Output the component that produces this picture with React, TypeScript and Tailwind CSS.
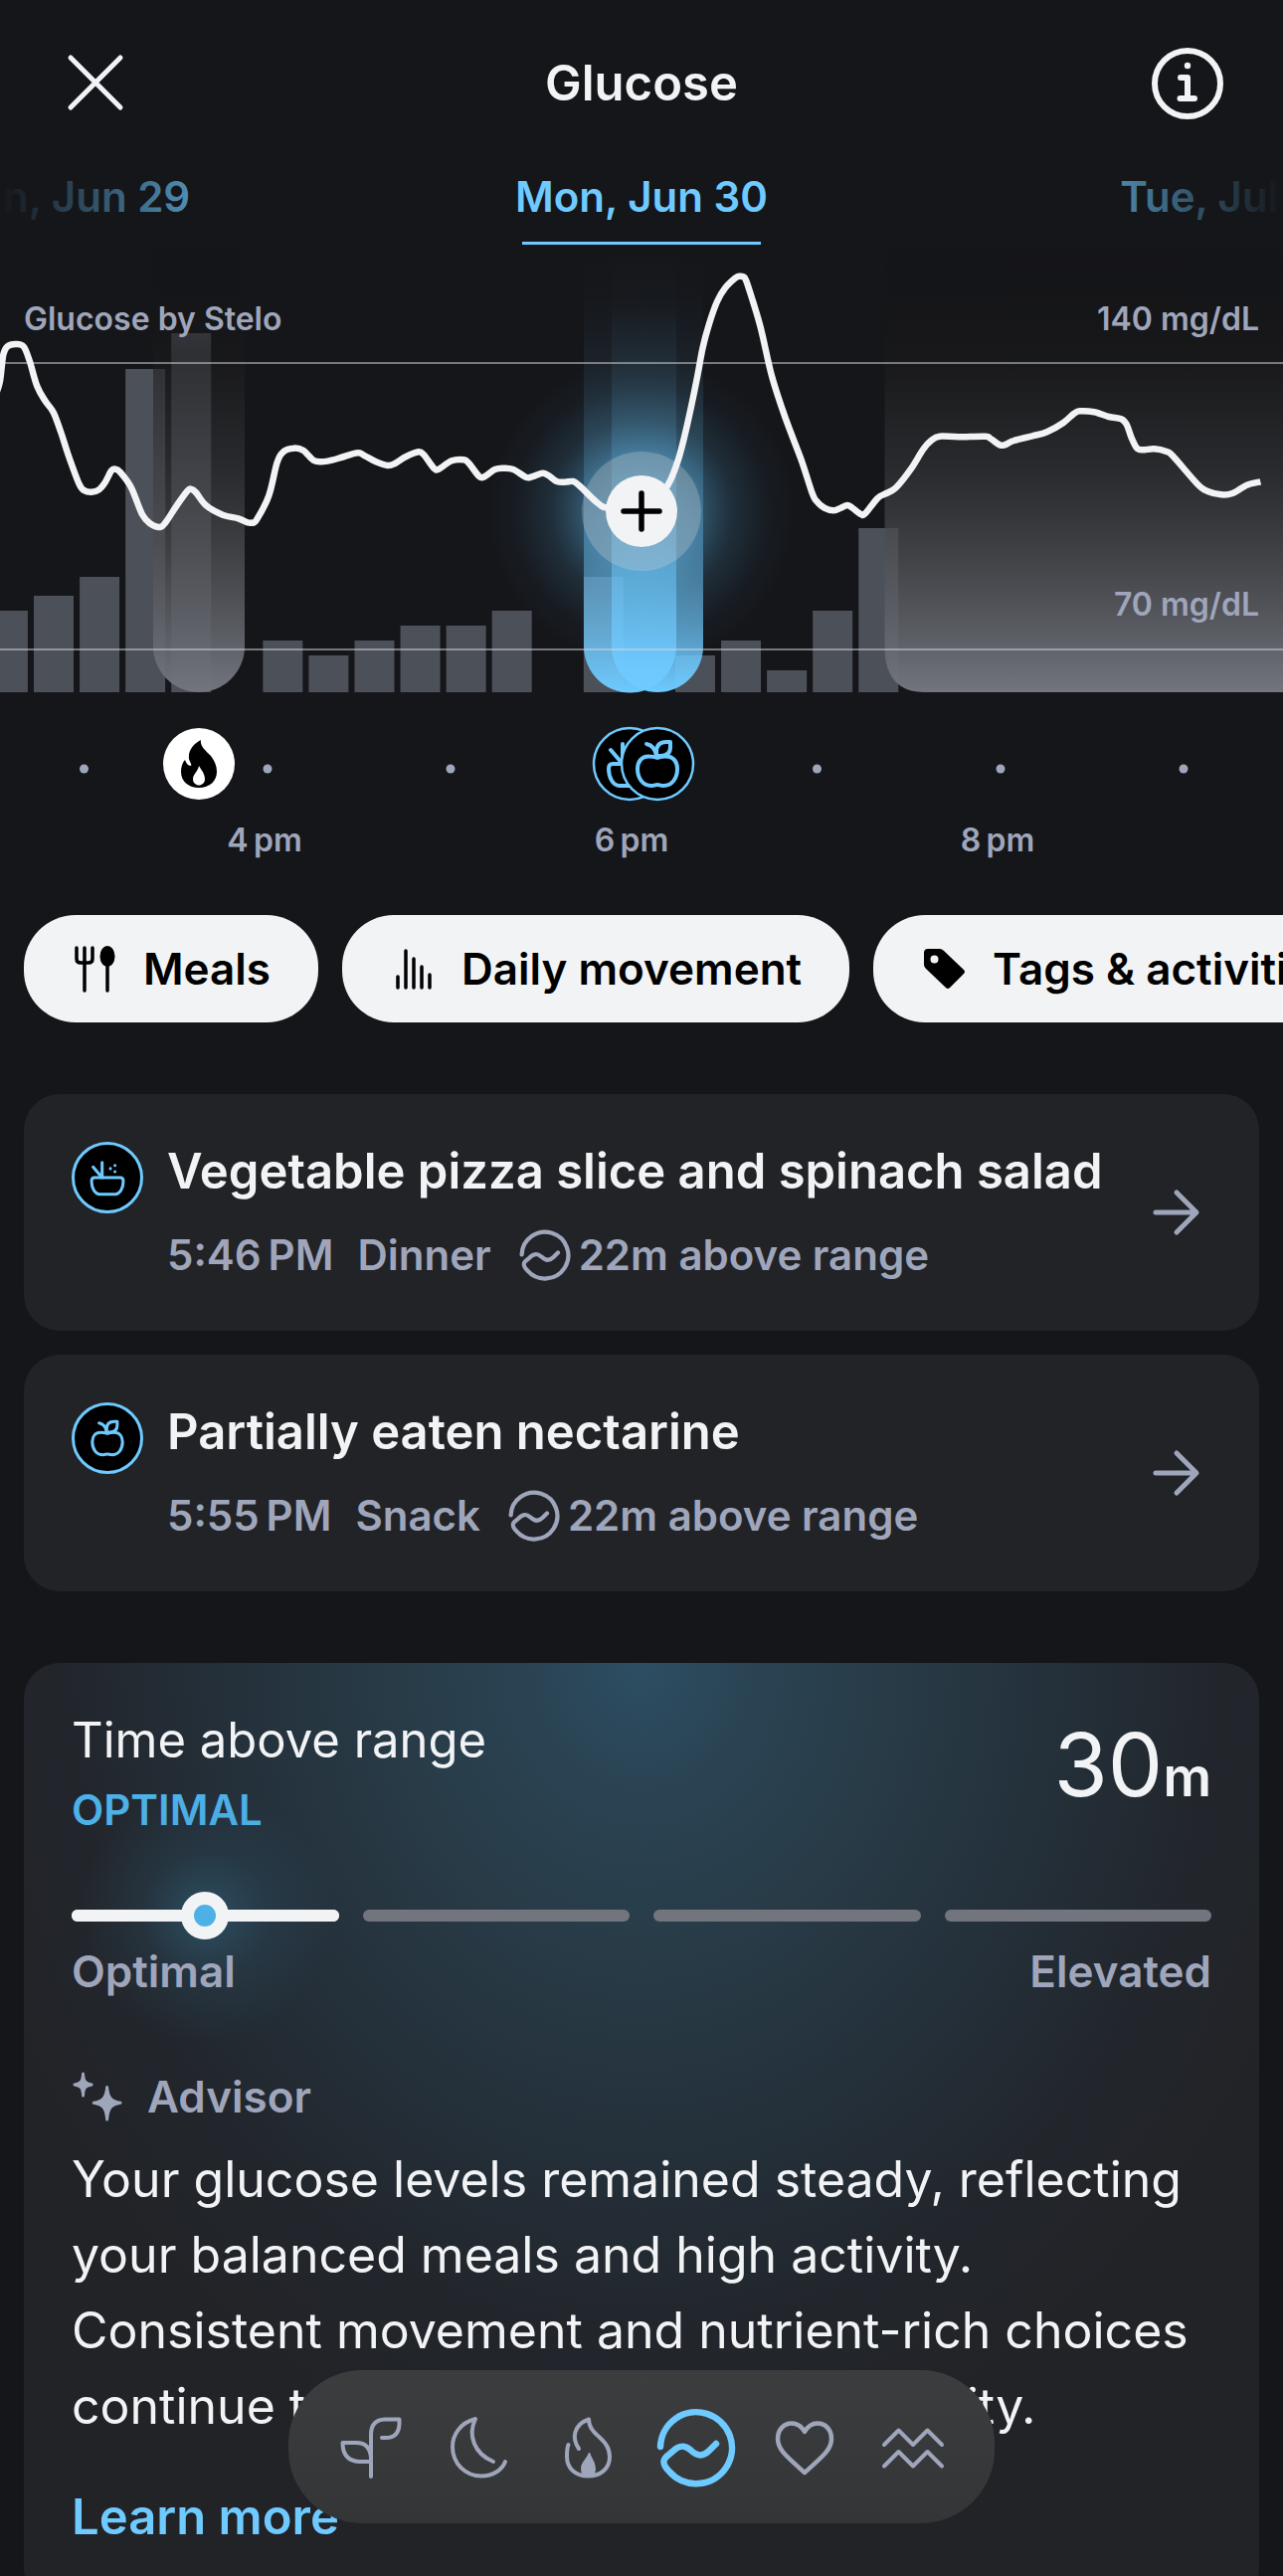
// src/features/glucose/GlucoseScreen.tsx
import type { ReactNode } from "react";

type Point = [number, number];

interface Meal {
  title: string;
  time:  string;
  kind:  string;
  note:  string;
  icon:  "bowl" | "apple";
}

const DAYS = ["Sun, Jun 29", "Mon, Jun 30", "Tue, Jul 1"];

const MEALS: Meal[] = [
  { title: "Vegetable pizza slice and spinach salad", time: "5:46\u2009PM", kind: "Dinner", note: "22m above range", icon: "bowl" },
  { title: "Partially eaten nectarine", time: "5:55\u2009PM", kind: "Snack", note: "22m above range", icon: "apple" },
];

// Movement bars: [slot, top]
const BARS: Point[] = [
  [-1, 614], [0, 599], [1, 580], [2, 371], [3, 335], [5, 644], [6, 659], [7, 644], [8, 629], [9, 629],
  [10, 614], [12, 580], [14, 659], [15, 644], [16, 674], [17, 614], [18, 531],
];

// Glucose trace in sample units, see toScreen
const TRACE: Point[] = [
  [-10, 470], [0, 430], [8, 350], [18, 325], [37, 318], [57, 325], [72, 370], [90, 445], [110, 490], [130, 525],
  [148, 585], [165, 650], [192, 740], [205, 760], [222, 764], [240, 757], [255, 735], [270, 700], [280, 695],
  [292, 705], [318, 750], [345, 832], [365, 860], [388, 870], [402, 855], [430, 802], [455, 760], [463, 755],
  [475, 765], [500, 805], [540, 833], [578, 844], [600, 856], [610, 857], [622, 848], [652, 775], [672, 675],
  [688, 642], [712, 632], [735, 638], [760, 668], [780, 673], [805, 668], [835, 657], [868, 646], [885, 655],
  [912, 673], [940, 684], [958, 678], [985, 657], [1015, 643], [1028, 652], [1052, 692], [1064, 695], [1095, 670],
  [1125, 667], [1137, 677], [1162, 717], [1175, 718], [1200, 696], [1220, 692], [1245, 696], [1275, 719],
  [1290, 718], [1315, 707], [1330, 714], [1350, 732], [1370, 734], [1390, 732], [1405, 745], [1450, 798],
  [1475, 812], [1544, 815], [1584, 790], [1619, 745], [1644, 670], [1664, 575], [1689, 430], [1704, 330],
  [1719, 260], [1739, 190], [1759, 148], [1784, 118], [1794, 113], [1806, 118], [1816, 150], [1844, 265],
  [1872, 415], [1906, 545], [1944, 670], [1969, 765], [1979, 790], [1999, 812], [2022, 820], [2039, 812],
  [2055, 804], [2066, 811], [2089, 832], [2099, 828], [2129, 782], [2146, 770], [2172, 752], [2209, 695],
  [2239, 635], [2259, 608], [2279, 596], [2324, 598], [2389, 596], [2402, 603], [2424, 622], [2436, 622],
  [2459, 609], [2504, 595], [2539, 583], [2579, 555], [2604, 528], [2619, 520], [2654, 523], [2689, 537],
  [2719, 544], [2732, 560], [2744, 600], [2756, 630], [2769, 637], [2799, 634], [2829, 642], [2844, 655],
  [2904, 740], [2929, 762], [2962, 772], [2989, 768], [3024, 743], [3057, 733],
];

const toScreen = ([x, y]: Point): Point => [x / 2.412, 240 + y / 3];

function smoothPath(points: Point[]) {
  const p = points.map(toScreen);
  let d = `M${p[0][0].toFixed(1)} ${p[0][1].toFixed(1)}`;
  for (let i = 0; i < p.length - 1; i++) {
    const a = p[Math.max(i - 1, 0)];
    const b = p[i];
    const c = p[i + 1];
    const e = p[Math.min(i + 2, p.length - 1)];
    const cp = [b[0] + (c[0] - a[0]) / 6, b[1] + (c[1] - a[1]) / 6, c[0] - (e[0] - b[0]) / 6, c[1] - (e[1] - b[1]) / 6];
    d += `C${cp.map((n) => n.toFixed(1)).join(" ")} ${c[0].toFixed(1)} ${c[1].toFixed(1)}`;
  }
  return d;
}

/* ---------- icons ---------- */

function AppleGlyph() {
  return (
    <g fill="none" stroke="#6ecaff" strokeWidth="4" strokeLinecap="round" strokeLinejoin="round">
      <path d="M0 -6C-4 -7.500 -6 -7.500 -9 -7.500C-16 -7.500 -20 -2 -20 5C-20 14 -15 22 -6 22C-3 22 -2 21 0 21C2 21 3 22 6 22C15 22 20 14 20 5C20 -2 16 -7.500 9 -7.500C6 -7.500 4 -7.500 0 -6Z" />
      <path d="M-1 -8C-2 -15 -6 -19 -11 -20" />
      <path d="M-1 -8V-12Q-1 -22 9 -22H13V-17Q13 -8 3 -8Z" />
    </g>
  );
}

function BowlGlyph() {
  return (
    <g>
      <g fill="none" stroke="#6ecaff" strokeWidth="4" strokeLinecap="round" strokeLinejoin="round">
        <path d="M-17 0H17Q21 0 21 5C21 13 17 22 10 22H-10C-17 22 -21 13 -21 5Q-21 0 -17 0Z" />
        <path d="M-7 -20V0L-19 -14" />
      </g>
      <g fill="#6ecaff">
        <circle cx="4" cy="-12" r="2" />
        <circle cx="10" cy="-16" r="2" />
        <circle cx="10" cy="-8" r="2" />
      </g>
    </g>
  );
}

function MealBadge({ icon }: { icon: Meal["icon"] }) {
  return (
    <svg viewBox="-36 -36 72 72" className="size-18 shrink-0" aria-hidden="true">
      <circle r="34.500" fill="#000" stroke="#6ecaff" strokeWidth="3" />
      <g transform="scale(0.76)">{icon === "bowl" ? <BowlGlyph /> : <AppleGlyph />}</g>
    </svg>
  );
}

function GlucoseIcon({ className }: { className: string }) {
  return (
    <svg
      viewBox="-40 -40 80 80"
      className={className}
      fill="none"
      stroke="currentColor"
      strokeWidth="6.500"
      strokeLinecap="round"
      strokeLinejoin="round"
      aria-hidden="true"
    >
      <path d="M-36 -1A36 36 0 1 1 -27 24C-34 17 -34 13 -30 9L-24 4C-17 -3 -12 -3 -6 2C1 9 7 9 13 3L20 -4" />
    </svg>
  );
}

function NavGlyph({ children }: { children: ReactNode }) {
  return (
    <svg
      viewBox="-40 -40 80 80"
      className="size-20"
      fill="none"
      stroke="currentColor"
      strokeWidth="4"
      strokeLinecap="round"
      strokeLinejoin="round"
      aria-hidden="true"
    >
      {children}
    </svg>
  );
}

/* ---------- sections ---------- */

function Header() {
  return (
    <header className="flex items-center justify-between px-[60px] pt-12">
      <button aria-label="Close" className="size-18">
        <svg viewBox="0 0 72 72" className="size-18" stroke="#f2f3f5" strokeWidth="5" strokeLinecap="round">
          <path d="M11 10L61 60M61 10L11 60" />
        </svg>
      </button>
      <h1 className="text-[49px] leading-[60px] font-semibold">Glucose</h1>
      <button aria-label="About glucose" className="size-18">
        <svg viewBox="0 0 72 72" className="size-18" fill="none" stroke="#f2f3f5">
          <circle cx="36" cy="36" r="33" strokeWidth="6" />
          <circle cx="36" cy="18" r="3.200" fill="#f2f3f5" stroke="none" />
          <path d="M29 30H36V51M28.500 51H43" strokeWidth="6" strokeLinecap="round" strokeLinejoin="round" />
        </svg>
      </button>
    </header>
  );
}

function DayTabs() {
  return (
    <nav aria-label="Day" className="relative overflow-hidden">
      <div className="-mx-14 grid grid-cols-[1fr_auto_1fr] pt-[52px] text-[42px] leading-[52px] font-semibold whitespace-nowrap">
        <a href="#prev" className="pl-1.5 text-[#4f8eb4]">{DAYS[0]}</a>
        <a href="#today" aria-current="date" className="flex flex-col items-center text-[#6ecaff]">
          {DAYS[1]}
          <span className="mt-[19px] h-[3px] w-60 bg-[#6ecaff]" />
        </a>
        <a href="#next" className="pr-8 text-right text-[#4f8eb4]">{DAYS[2]}</a>
      </div>
      <div className="pointer-events-none absolute inset-y-0 left-0 w-48 bg-linear-to-r from-[#15161a] to-transparent" />
      <div className="pointer-events-none absolute inset-y-0 right-0 w-44 bg-linear-to-l from-[#15161a] to-transparent" />
    </nav>
  );
}

function GlucoseChart() {
  return (
    <section aria-label="Glucose chart" className="relative">
      <svg viewBox="0 246 1290 634" className="block w-full">
        <defs>
          <linearGradient id="band" x1="0" y1="0" x2="0" y2="1">
            <stop offset="0" stopColor="#101010" stopOpacity="0.1" />
            <stop offset="0.25" stopColor="#1a1a1b" stopOpacity="0.6" />
            <stop offset="0.5" stopColor="#37383b" stopOpacity="0.6" />
            <stop offset="0.75" stopColor="#55575c" stopOpacity="0.8" />
            <stop offset="1" stopColor="#72757e" />
          </linearGradient>
          <linearGradient id="meal" x1="0" y1="0" x2="0" y2="1">
            <stop offset="0" stopColor="#6ecaff" stopOpacity="0" />
            <stop offset="0.12" stopColor="#6ecaff" stopOpacity="0.01" />
            <stop offset="0.3" stopColor="#6ecaff" stopOpacity="0.08" />
            <stop offset="0.5" stopColor="#6ecaff" stopOpacity="0.2" />
            <stop offset="0.7" stopColor="#6ecaff" stopOpacity="0.42" />
            <stop offset="0.88" stopColor="#6ecaff" stopOpacity="0.74" />
            <stop offset="1" stopColor="#6ecaff" />
          </linearGradient>
          <radialGradient id="glow">
            <stop offset="0" stopColor="#5cabd8" stopOpacity="0.6" />
            <stop offset="0.38" stopColor="#4a8fb8" stopOpacity="0.52" />
            <stop offset="0.6" stopColor="#3a7090" stopOpacity="0.26" />
            <stop offset="0.8" stopColor="#3a7090" stopOpacity="0.08" />
            <stop offset="1" stopColor="#3a7090" stopOpacity="0" />
          </radialGradient>
        </defs>

        {BARS.map(([slot, top]) => (
          <rect key={slot} x={34 + slot * 46.07} y={top} width="40" height={696 - top} fill="#4c5059" />
        ))}

        <circle cx="645" cy="514" r="155" fill="url(#glow)" />
        <path d="M154 246H246V650A46 46 0 0 1 154 650Z" fill="url(#band)" />
        <path d="M889.500 246H1290V696H930Q889.500 696 889.500 650Z" fill="url(#band)" />
        <path d="M587 246H680V650A46 46 0 0 1 587 650Z" fill="url(#meal)" />
        <path d="M615 246H707V650A46 46 0 0 1 615 650Z" fill="url(#meal)" />
        <circle cx="645" cy="514" r="60" fill="#d8d4d0" fillOpacity="0.28" />

        <path d="M0 365H1290M0 653H1290" stroke="#d8dae0" strokeOpacity="0.5" strokeWidth="2" />
        <path d={smoothPath(TRACE)} fill="none" stroke="#f2f3f5" strokeWidth="6.500" strokeLinejoin="round" />

        <g fill="#9fa6bb" className="text-[32px] font-semibold">
          <text x="24" y="332">Glucose by Stelo</text>
          <text x="1266" y="332" textAnchor="end">140 mg/dL</text>
          <text x="1266" y="619" textAnchor="end">70 mg/dL</text>
          <text x="266" y="856" textAnchor="middle">4{"\u2009"}pm</text>
          <text x="635" y="856" textAnchor="middle">6{"\u2009"}pm</text>
          <text x="1003" y="856" textAnchor="middle">8{"\u2009"}pm</text>
        </g>

        {[84.5, 269, 453, 821.5, 1006, 1190].map((x) => (
          <circle key={x} cx={x} cy="773" r="4.500" fill="#9fa6bb" />
        ))}

        <g transform="translate(200 768)">
          <circle r="36" fill="#fff" />
          <path d="M2 -24C-6 -20 -11 -13 -10 -5C-9 -1 -7 0 -8 2C-11 2 -13 -1 -14 -4C-17 -1 -18 4 -18 8C-18 18 -10 24 0 24C11 24 18 17 18 8C18 1 15 -4 12 -8C6 -14 1 -18 2 -24Z" fill="#000" />
          <path d="M0 2C-1 8 -6 10 -6 15.500C-6 19 -3 21.500 0 21.500C3 21.500 6 19 6 15.500C6 10 3 7 0 2Z" fill="#fff" />
        </g>
        <g transform="translate(633 768)">
          <circle r="36" fill="#000" stroke="#6ecaff" strokeWidth="2.500" />
          <BowlGlyph />
        </g>
        <g transform="translate(661 768)">
          <circle r="36" fill="#000" stroke="#6ecaff" strokeWidth="2.500" />
          <AppleGlyph />
        </g>
      </svg>

      <button aria-label="Add entry" className="absolute top-58 left-1/2 size-18 -translate-x-1/2 rounded-full">
        <svg viewBox="0 0 72 72" className="size-18" stroke="#000" strokeWidth="5.500" strokeLinecap="round">
          <circle cx="36" cy="36" r="36" fill="#f2f3f5" stroke="none" />
          <path d="M36 18V54M18 36H54" />
        </svg>
      </button>
    </section>
  );
}

function Chip({ label, children }: { label: string; children: ReactNode }) {
  return (
    <button className="flex h-27 shrink-0 items-center gap-6 rounded-[52px] bg-[#f2f3f5] pr-12 pl-12 text-[44px] leading-[52px] font-semibold whitespace-nowrap text-black">
      <svg viewBox="0 0 48 48" className="size-12" aria-hidden="true">
        {children}
      </svg>
      {label}
    </button>
  );
}

function Filters() {
  return (
    <div className="mt-10 flex gap-6 overflow-hidden px-6">
      <Chip label="Meals">
        <g fill="none" stroke="#000" strokeWidth="3.500" strokeLinecap="round">
          <path d="M5 3V14Q5 18 9 18H17Q21 18 21 14V3M13 3V46M36 20V46" />
        </g>
        <ellipse cx="36" cy="11.500" rx="7.500" ry="10.500" />
      </Chip>
      <Chip label="Daily movement">
        <path d="M8 32V43M16 6V43M24 14V43M32 22V43M40 30V43" stroke="#000" strokeWidth="3.500" strokeLinecap="round" />
      </Chip>
      <Chip label="Tags &amp; activities">
        <path
          fillRule="evenodd"
          d="M7 4H19Q21 4 23 6L43 25Q45 27 43 29L29 43Q27 45 25 43L5 24Q3 22 3 20V8Q3 4 7 4ZM13.500 10.500A4 4 0 1 0 13.500 18.500A4 4 0 1 0 13.500 10.500Z"
        />
      </Chip>
    </div>
  );
}

function MealCard({ meal }: { meal: Meal }) {
  return (
    <a href="#meal" className="flex items-center justify-between rounded-[36px] bg-[#222327] px-12 pt-12 pb-[46px]">
      <div className="flex gap-6">
        <MealBadge icon={meal.icon} />
        <div className="flex flex-col gap-6">
          <h2 className="text-[49px] leading-[60px] font-semibold">{meal.title}</h2>
          <p className="flex items-center text-[42px] leading-[60px] font-semibold text-[#9fa6bb]">
            <span>{meal.time}</span>
            <span className="ml-6">{meal.kind}</span>
            <GlucoseIcon className="mr-2 ml-7 size-13" />
            <span>{meal.note}</span>
          </p>
        </div>
      </div>
      <svg viewBox="0 0 60 60" className="size-15 shrink-0" fill="none" stroke="#9fa6bb" strokeWidth="5" strokeLinecap="round" strokeLinejoin="round" aria-hidden="true">
        <path d="M4 29H44M25 9L45 29L25 49" />
      </svg>
    </a>
  );
}

function RangeCard() {
  return (
    <section className="rounded-[36px] bg-[#222327] bg-[radial-gradient(ellipse_720px_840px_at_50%_0%,#2d4e63_0%,#2a4353_16%,#283b47_35%,#24303a_58%,#22262c_80%,#222327_100%)] px-12 pt-12 pb-14">
      <div className="flex justify-between">
        <div className="flex flex-col gap-2.5">
          <h2 className="text-[49px] leading-[60px]">Time above range</h2>
          <p className="text-[42px] leading-[60px] font-semibold text-[#4db1e8]">OPTIMAL</p>
        </div>
        <p className="text-[88px] leading-[108px]">
          30<span className="text-[54px] font-semibold">m</span>
        </p>
      </div>

      {/* Level track */}
      <div className="mt-[70px] grid grid-cols-4 gap-6">
        <div className="relative flex h-3 items-center justify-center rounded-full bg-[#f2f3f5]">
          <span className="absolute size-64 rounded-full bg-[radial-gradient(closest-side,#35708f80,#35708f26_50%,transparent)]" />
          <span className="absolute h-3 w-full rounded-full bg-[#f2f3f5]" />
          <span className="absolute size-12 rounded-full border-[13px] border-[#f2f3f5] bg-[#4db1e8]" />
        </div>
        <div className="h-3 rounded-full bg-[#72757e]" />
        <div className="h-3 rounded-full bg-[#72757e]" />
        <div className="h-3 rounded-full bg-[#72757e]" />
      </div>
      <div className="relative mt-5 flex justify-between text-[44px] leading-[60px] font-semibold text-[#9fa6bb]">
        <span>Optimal</span>
        <span>Elevated</span>
      </div>

      <div className="mt-[66px] flex items-center gap-6 text-[44px] leading-[60px] font-semibold text-[#9fa6bb]">
        <svg viewBox="0 0 54 54" className="size-13" fill="currentColor" stroke="currentColor" strokeWidth="3" strokeLinejoin="round" aria-hidden="true">
          <path d="M37 17C38 28 41 32 51 33.500C41 35 38 39 37 51C36 39 33 35 23 33.500C33 32 36 28 37 17Z" />
          <path d="M12 3C12.500 11 14 13.500 21 14.500C14 15.500 12.500 18 12 26C11.500 18 10 15.500 3 14.500C10 13.500 11.500 11 12 3Z" />
        </svg>
        Advisor
      </div>
      <p className="mt-[15px] text-[50px] leading-[76px]">
        Your glucose levels remained steady, reflecting your balanced meals and high activity. Consistent movement and
        nutrient-rich choices continue to fuel your metabolic flexibility.
      </p>
      <a href="#learn" className="mt-11 block text-[49px] leading-[60px] font-semibold text-[#6ecaff]">
        Learn more
      </a>
    </section>
  );
}

function BottomNav() {
  const item = "flex h-full flex-1 items-center justify-center pt-0.5";
  return (
    <nav
      aria-label="Sections"
      className="fixed bottom-[53px] left-1/2 flex h-[154px] w-[710px] -translate-x-1/2 rounded-[74px] bg-linear-to-b from-[#3c3d3f] to-[#343537] px-7 text-[#9fa6bb]"
    >
      <button aria-label="Readiness" className={item}>
        <NavGlyph>
          <path d="M0 29V-13Q0 -28 14 -28.500H28.500V-24Q28 -10 15 -10H11" />
          <path d="M0 14H-12Q-28.500 13 -28.500 -5H-15Q-1 -5 0 10" />
        </NavGlyph>
      </button>
      <button aria-label="Sleep" className={item}>
        <NavGlyph>
          <path d="M14 14C-5 6 -12 -12 -4 -29C-20 -25 -27 -12 -27 -1C-27 16 -14 28.500 2 28.500C14 28.500 23 22 26 14" />
        </NavGlyph>
      </button>
      <button aria-label="Activity" className={item}>
        <NavGlyph>
          <path d="M-9 1C-16 -9 -15 -23 1 -28.500C1 -12 22 -10 22 9C22 22 12 28.500 0 28.500C-12 28.500 -21 21 -21 9C-21 4 -21 0 -19.500 -3" />
          <path d="M1.500 6C0 12 -6 14 -6 21C-6 26 -4 28 0.500 28C5 28 7 26 7 21C7 14 3 12 1.500 6Z" fill="currentColor" strokeWidth="2" />
        </NavGlyph>
      </button>
      <button aria-label="Glucose" aria-current="page" className="flex h-full flex-1 items-center justify-center pt-0.5 text-[#6ecaff]">
        <GlucoseIcon className="size-20" />
      </button>
      <button aria-label="Heart" className={item}>
        <NavGlyph>
          <path d="M0 -16C-4 -23 -9 -24.500 -13 -24.500C-21 -24.500 -27 -18 -27 -9C-27 2 -18 9 0 25C18 9 27 2 27 -9C27 -18 21 -24.500 13 -24.500C9 -24.500 4 -23 0 -16Z" strokeWidth="4.500" />
        </NavGlyph>
      </button>
      <button aria-label="Stress" className={item}>
        <NavGlyph>
          <path d="M-29 -3L-14.500 -17.500L0 -3L14.500 -17.500L29 -3M-29 18.500L-14.500 4L0 18.500L14.500 4L29 18.500" />
        </NavGlyph>
      </button>
    </nav>
  );
}

export default function App() {
  return (
    <div className="h-screen overflow-hidden bg-[#15161a] font-['Inter','Liberation_Sans',sans-serif] text-[#f2f3f5]">
      <Header />
      <DayTabs />
      <GlucoseChart />
      <Filters />
      <main className="mt-18 flex flex-col gap-6 px-6">
        {MEALS.map((meal) => (
          <MealCard key={meal.title} meal={meal} />
        ))}
        <div className="mt-12">
          <RangeCard />
        </div>
      </main>
      <BottomNav />
    </div>
  );
}
